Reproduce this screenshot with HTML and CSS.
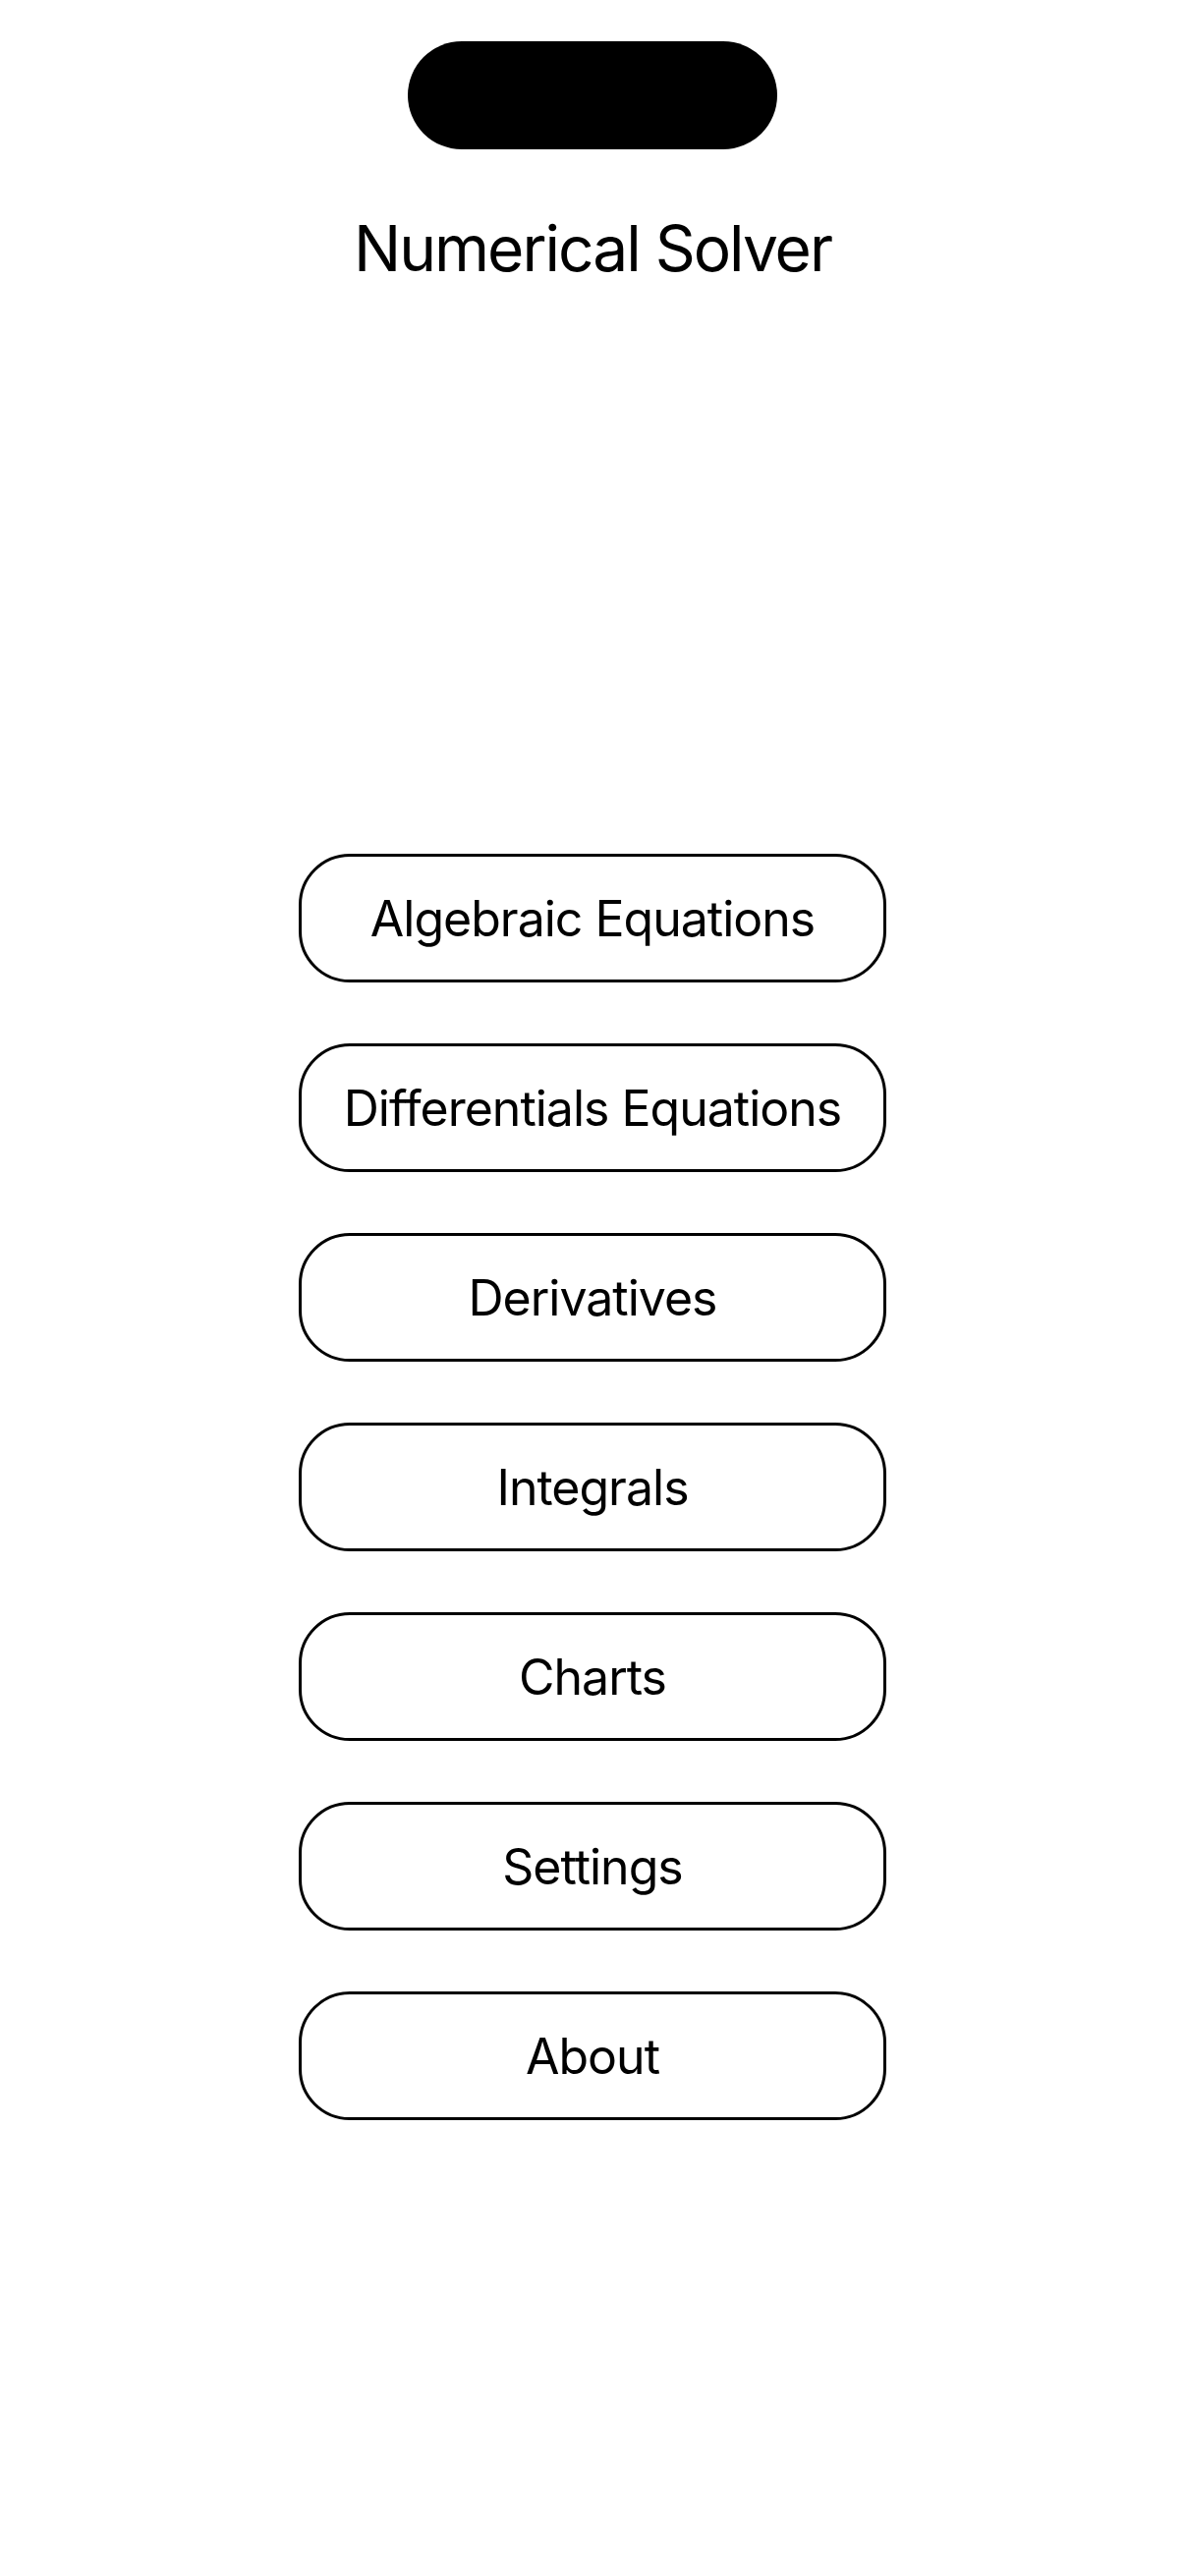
FILE: index.html
```html
<!DOCTYPE html>
<html lang="en">
<head>
    <meta charset="UTF-8">
    <meta name="viewport" content="width=device-width, initial-scale=1.0">
    <title>Numerical Solver</title>
    <link rel="stylesheet" href="styles.css">
</head>
<body>
    <div class="island"></div>

    <h1 class="title">Numerical Solver</h1>

    <div class="menu">
        <a href="#" class="btn">Algebraic Equations</a>
        <a href="#" class="btn">Differentials Equations</a>
        <a href="#" class="btn">Derivatives</a>
        <a href="#" class="btn">Integrals</a>
        <a href="#" class="btn">Charts</a>
        <a href="#" class="btn">Settings</a>
        <a href="#" class="btn">About</a>
    </div>
</body>
</html>
```

FILE: styles.css
```css
body {
    font-family: Inter, 'Noto Sans', sans-serif;
    margin: 0;
    background-color: #fff;
    color: #000;
}

.island {
    width: 376px;
    height: 110px;
    margin: 42px auto 0;
    background-color: #000;
    border-radius: 55px;
}

.title {
    font-size: 64px;
    font-weight: 400;
    line-height: 80px;
    text-align: center;
    margin: 61px 0 0;
    letter-spacing: -2px;
}

.menu {
    display: flex;
    flex-direction: column;
    align-items: center;
    gap: 62px;
    margin-top: 576px;
}

.btn {
    box-sizing: border-box;
    display: flex;
    align-items: center;
    justify-content: center;
    width: 598px;
    height: 131px;
    border: 3px solid #000;
    border-radius: 52px;
    font-size: 50px;
    color: #000;
    text-decoration: none;
    letter-spacing: -1px;
}
```
